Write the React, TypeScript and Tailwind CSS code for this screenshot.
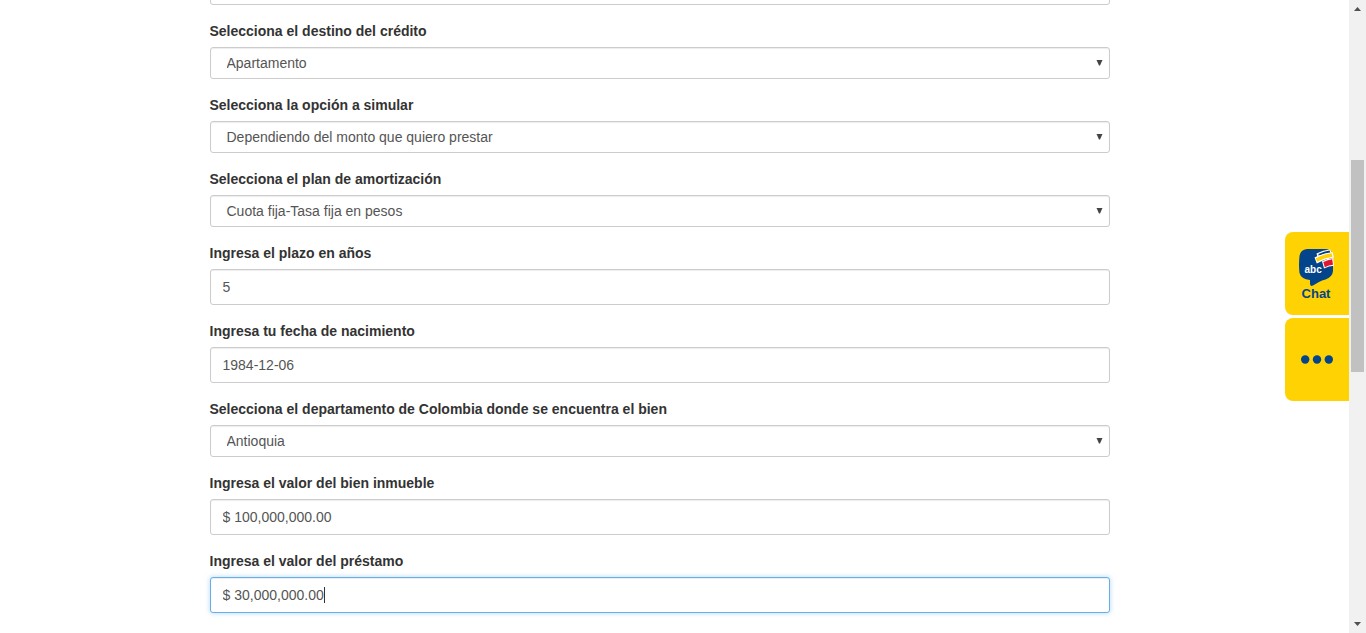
import { useState } from "react";

type Field = {
  id: string;
  label: string;
  kind: "select" | "text";
  value: string;
  active?: boolean;
};

const fields: Field[] = [
  { id: "destino", label: "Selecciona el destino del crédito", kind: "select", value: "Apartamento" },
  { id: "opcion", label: "Selecciona la opción a simular", kind: "select", value: "Dependiendo del monto que quiero prestar" },
  { id: "plan", label: "Selecciona el plan de amortización", kind: "select", value: "Cuota fija-Tasa fija en pesos" },
  { id: "plazo", label: "Ingresa el plazo en años", kind: "text", value: "5" },
  { id: "nacimiento", label: "Ingresa tu fecha de nacimiento", kind: "text", value: "1984-12-06" },
  { id: "departamento", label: "Selecciona el departamento de Colombia donde se encuentra el bien", kind: "select", value: "Antioquia" },
  { id: "inmueble", label: "Ingresa el valor del bien inmueble", kind: "text", value: "$ 100,000,000.00" },
  { id: "prestamo", label: "Ingresa el valor del préstamo", kind: "text", value: "$ 30,000,000.00", active: true },
];

function SelectBox({ id, value }: { id: string; value: string }) {
  return (
    <div className="relative">
      <select
        id={id}
        aria-label={id === "tipo" ? "Tipo de crédito" : undefined}
        className="block h-8 w-full appearance-none rounded-[3px] border border-[#ccc] bg-white px-4 text-sm text-[#555] shadow-[inset_0_1px_1px_rgba(0,0,0,0.075)] outline-none"
      >
        <option>{value}</option>
      </select>
      <svg className="pointer-events-none absolute top-3 right-[7px] h-[7px] w-[7px]" viewBox="0 0 7 7" aria-hidden="true">
        <path d="M0.500 1H6.500L4 6.500H3Z" fill="#444" />
      </svg>
    </div>
  );
}

function TextBox({ field }: { field: Field }) {
  const [value, setValue] = useState(field.value);
  const tone = field.active
    ? "border-[#66afe9] shadow-[inset_0_1px_1px_rgba(0,0,0,0.075),0_0_5px_rgba(102,175,233,0.5)]"
    : "border-[#ccc] shadow-[inset_0_1px_1px_rgba(0,0,0,0.075)]";
  return (
    <div className="relative">
      <input
        id={field.id}
        type="text"
        value={value}
        onChange={(e) => setValue(e.target.value)}
        className={`block h-9 w-full rounded-[3px] border bg-white px-3 text-sm text-[#555] caret-transparent outline-none ${tone}`}
      />
      {field.active && <span className="absolute top-2.5 left-[114px] h-4 w-px bg-[#333]" />}
    </div>
  );
}

function ChatLogo() {
  return (
    <svg className="h-[38px] w-9" viewBox="0 0 36 38" aria-hidden="true">
      <path
        d="M9 1H27Q32 1 34 4.500L35 11V23Q34.500 29 27.500 31.500Q24 32 21 34L15 37.500Q12 39 12 35.500V32Q3 31 1.500 25Q0.500 17 1.500 8Q2.500 1.500 9 1Z"
        fill="#04448a"
      />
      <path d="M18.500 5.500Q25 2 32 1.500L34 5Q26 6 19.500 9Z" fill="#fff" />
      <path d="M20.500 6Q26 3.200 31.500 2.600L32.500 5Q26 5.500 20.500 8Z" fill="#063f87" />
      <path d="M16.500 9.500Q25 5 34.500 4L36 9.500Q27 11 18.800 15.500Z" fill="#fff" />
      <path d="M17.800 10.200Q25.500 6.200 33.500 5.200L34.500 8.700Q26.500 9.800 19.200 13.800Z" fill="#ffd204" />
      <path d="M24 13.200Q29.500 10.500 35.200 10L36 17.800Q31 18 26 20.500Z" fill="#fff" />
      <path d="M25.300 14Q30 11.600 34.200 11.200L35 16.700Q31 17 26.800 19.200Z" fill="#df1830" />
      <text x="6.500" y="24.500" fill="#fff" fontFamily="Liberation Sans, Arial, sans-serif" fontSize="10" fontWeight="700">
        abc
      </text>
    </svg>
  );
}

function SideActions() {
  return (
    <aside className="absolute top-[232px] right-0 flex w-16 flex-col gap-[3px]">
      <button type="button" className="flex h-[83px] flex-col items-center rounded-l-lg bg-[#ffd204] pt-4 pr-0.5">
        <ChatLogo />
        <span className="text-[13px] leading-4 font-bold text-[#04448a]">Chat</span>
      </button>
      <button
        type="button"
        aria-label="Más opciones"
        className="flex h-[83px] items-center justify-center rounded-l-lg bg-[#ffd204]"
      >
        <svg className="h-[9px] w-8" viewBox="0 0 32 9" fill="#04448a" aria-hidden="true">
          <circle cx="4.200" cy="4.500" r="4.200" />
          <circle cx="16" cy="4.500" r="4.200" />
          <circle cx="27.800" cy="4.500" r="4.200" />
        </svg>
      </button>
    </aside>
  );
}

function ScrollTrack() {
  return (
    <div className="flex w-[17px] shrink-0 flex-col items-center bg-[#f1f1f1]" aria-hidden="true">
      <svg className="size-[17px] shrink-0" viewBox="0 0 17 17">
        <path d="M5 11H12L8.500 7Z" fill="#505050" />
      </svg>
      <div className="min-h-0 w-full flex-1 px-0.5 pt-[143px]">
        <div className="h-[212px] bg-[#c1c1c1]" />
      </div>
      <svg className="size-[17px] shrink-0" viewBox="0 0 17 17">
        <path d="M5 6H12L8.500 10Z" fill="#505050" />
      </svg>
    </div>
  );
}

export default function App() {
  return (
    <div className="flex h-screen overflow-hidden bg-white font-['Liberation_Sans',Arial,sans-serif] text-sm text-[#333]">
      <div className="relative min-w-0 flex-1 overflow-hidden">
        <main className="pr-[30px]">
          <form className="mx-auto -mt-[27px] flex max-w-[900px] flex-col gap-4">
            <SelectBox id="tipo" value="Vivienda" />
            {fields.map((field) => (
              <div key={field.id} className="flex flex-col gap-1.5">
                <label htmlFor={field.id} className="text-sm leading-5 font-bold">
                  {field.label}
                </label>
                {field.kind === "select" ? <SelectBox id={field.id} value={field.value} /> : <TextBox field={field} />}
              </div>
            ))}
          </form>
        </main>
        <SideActions />
      </div>
      <ScrollTrack />
    </div>
  );
}
